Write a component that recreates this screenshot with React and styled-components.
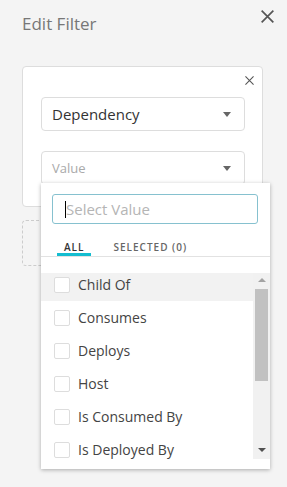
import { createGlobalStyle, styled } from "styled-components";

const GlobalStyle = createGlobalStyle`
    html, body {
        margin: 0;
        background: #f4f4f4;
        font-family: "Open Sans", "Liberation Sans", sans-serif;
    }
`

const items = ["Child Of", "Consumes", "Deploys", "Host", "Is Consumed By", "Is Deployed By"];

const CloseIcon = ({ size, stroke }) => (
    <svg width={size} height={size} viewBox="0 0 10 10">
        <path d="M0.5 0.5 L9.5 9.5 M9.5 0.5 L0.5 9.5" stroke="#555" strokeWidth={stroke} fill="none" />
    </svg>
)

const Caret = () => (
    <svg width="8" height="5" viewBox="0 0 8 5">
        <path d="M0 0 H8 L4 5 Z" fill="#666" />
    </svg>
)

const App = () => {
    return <Page>
        <GlobalStyle />
        <Header>
            <Title>Edit Filter</Title>
            <CloseIcon size={13} stroke={1.3} />
        </Header>

        <Card>
            <CardClose>
                <CloseIcon size={9} stroke={1.2} />
            </CardClose>
            <Select>
                <SelectText>Dependency</SelectText>
                <Caret />
            </Select>
            <ValueWrap>
                <Select>
                    <SelectText $placeholder>Value</SelectText>
                    <Caret />
                </Select>
                <Dropdown>
                    <SearchArea>
                        <SearchBox>
                            <SearchInput placeholder="Select Value" />
                            <TextCursor />
                        </SearchBox>
                    </SearchArea>
                    <Tabs>
                        <Tab $active>ALL</Tab>
                        <Tab>SELECTED (0)</Tab>
                    </Tabs>
                    <ListArea>
                        <List>
                            <Scroller>
                                {items.map((item, i) => (
                                    <Row key={item} $hover={i === 0}>
                                        <Check />
                                        <span>{item}</span>
                                    </Row>
                                ))}
                            </Scroller>
                        </List>
                        <Scrollbar>
                            <ArrowUp />
                            <Track>
                                <Thumb />
                            </Track>
                            <ArrowDown />
                        </Scrollbar>
                    </ListArea>
                </Dropdown>
            </ValueWrap>
        </Card>

        <AddBox />
    </Page>;
}

export default App;

const Page = styled.div`
    padding: 0 24px 0 22px;
    min-height: 487px;
    box-sizing: border-box;
`

const Header = styled.div`
    display: flex;
    justify-content: space-between;
    align-items: flex-start;
    padding-top: 10px;
    margin-right: -11px;
`

const Title = styled.div`
    margin-top: 4px;
    font-size: 17px;
    line-height: 20px;
    color: #777;
`

const Card = styled.div`
    margin-top: 32px;
    background: #fff;
    border: 1px solid #ddd;
    border-radius: 4px;
    padding: 9px 17px 21px 18px;
`

const CardClose = styled.div`
    display: flex;
    justify-content: flex-end;
    height: 9px;
    margin-right: -9px;
    margin-bottom: 12px;
`

const Select = styled.div`
    display: flex;
    align-items: center;
    justify-content: space-between;
    height: 34px;
    box-sizing: border-box;
    border: 1px solid #ddd;
    border-radius: 4px;
    padding: 0 13px 0 10px;
    background: #fff;
`

const SelectText = styled.span`
    font-size: ${p => p.$placeholder ? "13px" : "15px"};
    color: ${p => p.$placeholder ? "#aaa" : "#333"};
`

const ValueWrap = styled.div`
    position: relative;
    margin-top: 20px;
`

const Dropdown = styled.div`
    position: absolute;
    top: 32px;
    left: 0;
    width: 229px;
    z-index: 2;
    background: #fff;
    box-shadow: 0 1px 4px rgba(0, 0, 0, 0.3);
    padding-bottom: 10px;
`

const SearchArea = styled.div`
    padding: 11px 12px 0 11px;
`

const SearchBox = styled.div`
    position: relative;
`

const SearchInput = styled.input`
    display: block;
    width: 100%;
    height: 30px;
    box-sizing: border-box;
    border: 1px solid #86c1cf;
    border-radius: 3px;
    padding: 0 0 0 13px;
    font-family: inherit;
    font-size: 15px;
    color: #333;
    outline: none;
    &::placeholder {
        color: #b5b5b5;
    }
`

const TextCursor = styled.span`
    position: absolute;
    left: 13px;
    top: 7px;
    width: 1px;
    height: 17px;
    background: #000;
`

const Tabs = styled.div`
    display: flex;
    gap: 15px;
    margin-top: 17px;
    padding-left: 16px;
    border-bottom: 1px solid #e2e2e2;
`

const Tab = styled.div`
    padding: 0 7px;
    font-size: 10px;
    line-height: 12px;
    font-weight: 600;
    letter-spacing: 1px;
    color: ${p => p.$active ? "#333" : "#666"};
    border-bottom: 3px solid ${p => p.$active ? "#14bdd0" : "transparent"};
`

const ListArea = styled.div`
    display: flex;
    margin-top: 16px;
    height: 186px;
`

const List = styled.div`
    flex: 1;
    overflow: hidden;
`

const Scroller = styled.div`
    margin-top: -5px;
`

const Row = styled.div`
    display: flex;
    align-items: center;
    gap: 8px;
    height: 33px;
    padding-left: 13px;
    background: ${p => p.$hover ? "#f2f2f2" : "#fff"};
    font-size: 14px;
    color: #444;
`

const Check = styled.span`
    width: 16px;
    height: 16px;
    box-sizing: border-box;
    border: 1px solid #ddd;
    border-radius: 2px;
    background: #fff;
`

const Scrollbar = styled.div`
    width: 17px;
    display: flex;
    flex-direction: column;
    align-items: center;
    background: #f1f1f1;
`

const ArrowUp = styled.div`
    margin: 5px 0 4px;
    width: 0;
    height: 0;
    border-left: 4px solid transparent;
    border-right: 4px solid transparent;
    border-bottom: 4px solid #a3a3a3;
`

const Track = styled.div`
    flex: 1;
    width: 100%;
    padding-top: 3px;
`

const Thumb = styled.div`
    margin: 0 auto;
    width: 13px;
    height: 92px;
    background: #c1c1c1;
`

const ArrowDown = styled.div`
    margin: 4px 0 7px;
    width: 0;
    height: 0;
    border-left: 4px solid transparent;
    border-right: 4px solid transparent;
    border-top: 4px solid #505050;
`

const AddBox = styled.div`
    margin-top: 13px;
    height: 46px;
    box-sizing: border-box;
    border: 1px dashed #ccc;
    border-radius: 4px;
`
